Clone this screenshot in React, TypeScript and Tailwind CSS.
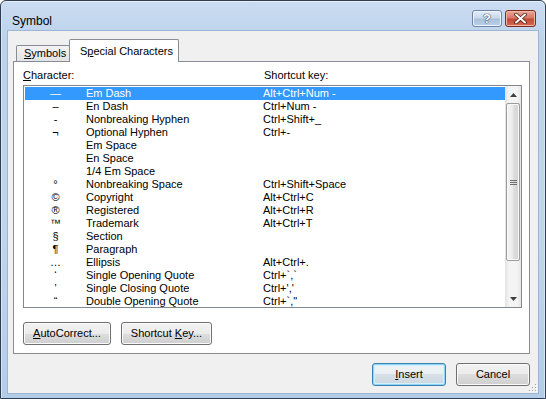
import React from "react";

const rows: [string, string, string][] = [
  ["\u2014", "Em Dash", "Alt+Ctrl+Num -"],
  ["\u2013", "En Dash", "Ctrl+Num -"],
  ["-", "Nonbreaking Hyphen", "Ctrl+Shift+_"],
  ["\u00ac", "Optional Hyphen", "Ctrl+-"],
  ["", "Em Space", ""],
  ["", "En Space", ""],
  ["", "1/4 Em Space", ""],
  ["\u00b0", "Nonbreaking Space", "Ctrl+Shift+Space"],
  ["\u00a9", "Copyright", "Alt+Ctrl+C"],
  ["\u00ae", "Registered", "Alt+Ctrl+R"],
  ["\u2122", "Trademark", "Alt+Ctrl+T"],
  ["\u00a7", "Section", ""],
  ["\u00b6", "Paragraph", ""],
  ["\u2026", "Ellipsis", "Alt+Ctrl+."],
  ["\u2018", "Single Opening Quote", "Ctrl+`,`"],
  ["\u2019", "Single Closing Quote", "Ctrl+','"],
  ["\u201c", "Double Opening Quote", "Ctrl+`,\""],
];

function Btn({ children, w, def }: { children: React.ReactNode; w: string; def?: boolean }) {
  return (
    <div
      className={
        "h-[23px] flex items-center justify-center rounded-[3px] border " +
        w +
        (def
          ? " border-[#3c7fb1] bg-[linear-gradient(to_bottom,#f0f4f7_0%,#e8eef2_50%,#d8e1e8_50%,#cbd6df_100%)] shadow-[inset_0_0_0_1px_#8ed6f7,inset_0_0_0_2px_#d4f0fc]"
          : " border-[#707070] bg-[linear-gradient(to_bottom,#f2f2f2_0%,#ebebeb_50%,#dddddd_50%,#cfcfcf_100%)] shadow-[inset_0_0_0_1px_#fbfbfb]")
      }
    >
      <span className="leading-[13px]">{children}</span>
    </div>
  );
}

export default function App() {
  return (
    <div className="w-[546px] h-[399px] font-['Liberation_Sans',Arial,sans-serif] text-[11px] text-black bg-white">
      <div className="w-full h-full flex flex-col rounded-t-[6px] border border-[#2f3e52] bg-[linear-gradient(to_bottom,#cadcf1_0%,#bcd3ec_10%,#bfd5ed_60%,#b3cde9_100%)] shadow-[inset_0_1px_0_#e6f0fa,inset_1px_0_0_#d6e5f5,inset_-1px_0_0_#d6e5f5]">
        {/* title bar */}
        <div className="h-[30px] flex items-start justify-between pl-[11px] pr-[9px]">
          <div className="pt-[13px] text-[12px] leading-[14px] text-black">Symbol</div>
          <div className="pt-[9px] flex gap-[3px]">
            <div className="w-[30px] h-[17px] rounded-[3px] border border-[#6d84a3] bg-[linear-gradient(to_bottom,#e4edf7_0%,#c9d9ec_45%,#a9c0dc_55%,#bcd1e9_100%)] shadow-[inset_0_0_0_1px_#eef4fb] flex items-center justify-center">
              <span className="text-[13px] leading-[13px] font-bold text-white [text-shadow:0_0_1px_#30435e,0_0_1px_#30435e,0_0_1px_#30435e]">?</span>
            </div>
            <div className="w-[31px] h-[17px] rounded-[3px] border border-[#7e2a1f] bg-[linear-gradient(to_bottom,#e9a99b_0%,#d7796a_45%,#c24a35_55%,#d56c52_100%)] shadow-[inset_0_0_0_1px_#efb7a8] flex items-center justify-center">
              <svg width="13" height="11" viewBox="0 0 13 11">
                <path d="M2 1.5 L11 9.5 M11 1.5 L2 9.5" stroke="#4a1a12" strokeWidth="3.6" strokeLinecap="round" />
                <path d="M2 1.5 L11 9.5 M11 1.5 L2 9.5" stroke="#ffffff" strokeWidth="2" strokeLinecap="round" />
              </svg>
            </div>
          </div>
        </div>

        {/* client area */}
        <div className="relative flex-1 mx-[7px] mb-[5px] bg-[#f0f0f0] shadow-[0_0_0_1px_#9cb5d2] flex flex-col pl-[5px] pr-[8px] pt-[8px]">
          {/* tabs */}
          <div className="relative z-10 h-[23px] -mb-px flex items-end pl-[3px]">
            <div className="mb-px h-[16px] w-[54px] border border-b-0 border-[#898c95] rounded-t-[2px] bg-[linear-gradient(to_bottom,#f3f3f3,#e3e3e3)] flex items-center pl-[7px] pb-[1px]">
              <span className="leading-[13px]"><span className="underline">S</span>ymbols</span>
            </div>
            <div className="-ml-px h-[23px] w-[110px] border border-b-0 border-[#898c95] rounded-t-[2px] bg-white flex items-start pl-[10px] pt-[5px]">
              <span className="leading-[13px]">S<span className="underline">p</span>ecial Characters</span>
            </div>
          </div>

          {/* panel */}
          <div className="h-[293px] border border-[#898c95] bg-white flex flex-col pl-[9px] pr-[7px] pt-[6px] pb-[8px]">
            <div className="h-[14px] flex items-center leading-[14px]">
              <div className="w-[241px]">
                <span className="underline">C</span>haracter:
              </div>
              <div>Shortcut key:</div>
            </div>
            <div className="mt-[3px] h-[223px] border border-[#828790] bg-white flex">
              <div className="flex-1 pl-px pt-px overflow-hidden">
                {rows.map(([g, n, s], i) => (
                  <div
                    key={i}
                    className={
                      "h-[13px] flex items-center leading-[13px] " +
                      (i === 0 ? "bg-[#3399ff] text-white" : "")
                    }
                  >
                    <div className="w-[61px] text-center">{g}</div>
                    <div className="w-[177px] whitespace-pre">{n}</div>
                    <div className="whitespace-pre">{s}</div>
                  </div>
                ))}
              </div>
              <div className="w-[16px] flex flex-col bg-[linear-gradient(to_right,#e2e2e2,#f4f4f4_25%,#f4f4f4_75%,#e6e6e6)]">
                <div className="h-[17px] flex items-center justify-center">
                  <svg width="7" height="4" viewBox="0 0 7 4">
                    <path d="M0 4 L3.5 0 L7 4 Z" fill="#404040" />
                  </svg>
                </div>
                <div className="h-[158px] mx-px rounded-[2px] border border-[#9c9c9c] bg-[linear-gradient(to_right,#f4f4f4,#ececec_45%,#dedede_55%,#d2d2d2)] shadow-[inset_0_0_0_1px_#fafafa] flex items-center justify-center">
                  <svg width="7" height="7" viewBox="0 0 7 7">
                    <path d="M0 1.5 H7 M0 3.5 H7 M0 5.5 H7" stroke="#6d6d6d" strokeWidth="1" />
                  </svg>
                </div>
                <div className="flex-1" />
                <div className="h-[17px] flex items-center justify-center">
                  <svg width="7" height="4" viewBox="0 0 7 4">
                    <path d="M0 0 L3.5 4 L7 0 Z" fill="#404040" />
                  </svg>
                </div>
              </div>
            </div>
            <div className="mt-[14px] flex gap-[10px]">
              <Btn w="w-[88px]">
                <span className="underline">A</span>utoCorrect...
              </Btn>
              <Btn w="w-[91px]">
                Shortcut <span className="underline">K</span>ey...
              </Btn>
            </div>
          </div>

          {/* bottom buttons */}
          <div className="mt-[9px] flex justify-end gap-[10px]">
            <Btn w="w-[74px]" def>
              <span className="underline">I</span>nsert
            </Btn>
            <Btn w="w-[74px]">Cancel</Btn>
          </div>

          {/* size grip */}
          <svg className="absolute right-[1px] bottom-[1px]" width="10" height="10" viewBox="0 0 10 10">
            {[
              [8, 2],
              [8, 5],
              [5, 5],
              [8, 8],
              [5, 8],
              [2, 8],
            ].map(([x, y], i) => (
              <g key={i}>
                <rect x={x} y={y} width="1" height="1" fill="#a0a0a0" />
                <rect x={x + 1} y={y + 1} width="1" height="1" fill="#ffffff" />
              </g>
            ))}
          </svg>
        </div>
      </div>
    </div>
  );
}
